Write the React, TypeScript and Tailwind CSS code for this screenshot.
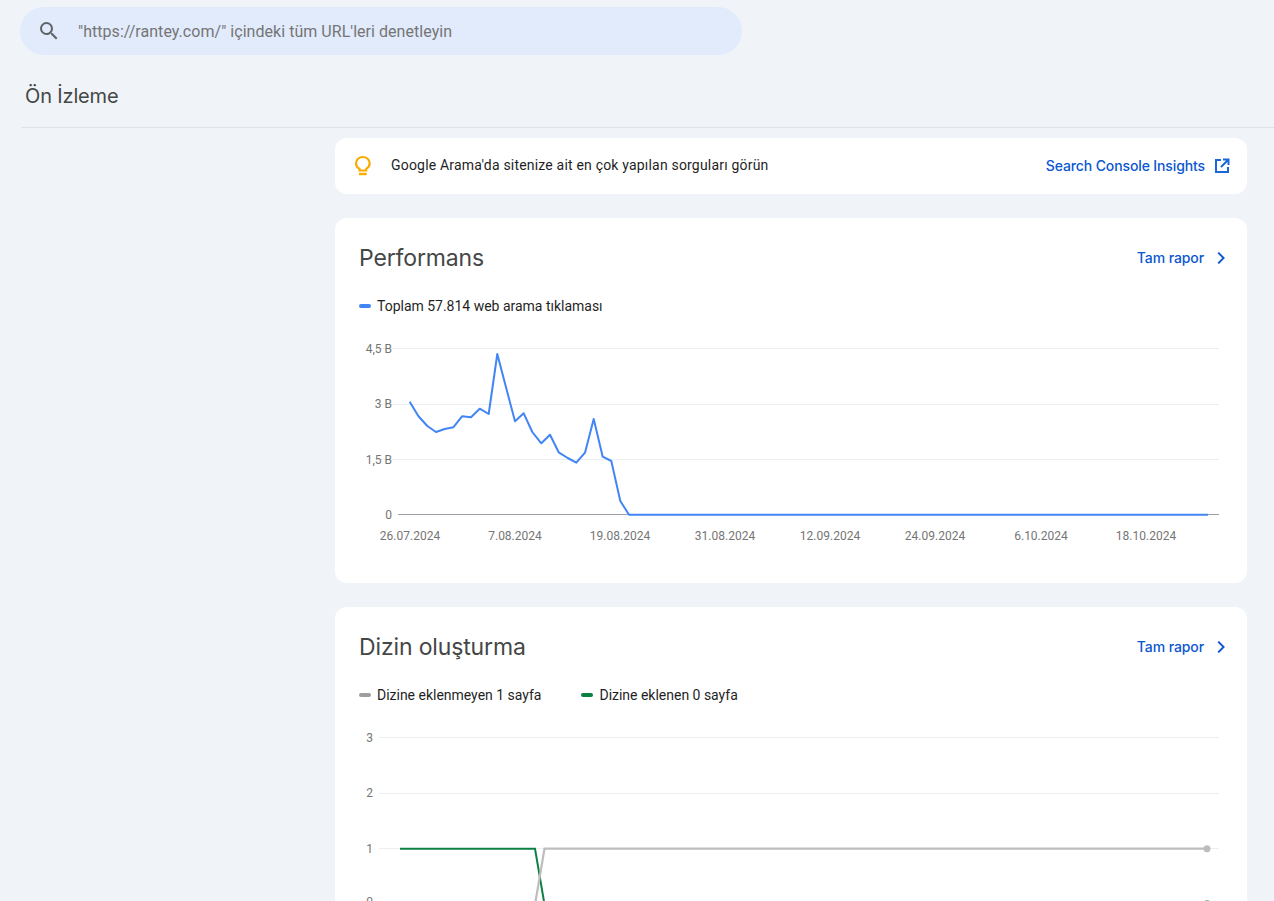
import React from "react";

const roboto = { fontFamily: "Roboto, sans-serif" };

const blue: [number, number][] = [[224,215],[250,258],[277,288],[303,306],[329,297],[355,292],[381,259],[408,262],[434,236],[461,252],[487,72],[513,172],[540,274],[566,250],[592,306],[619,340],[645,314],[671,367],[698,384],[724,398],[750,368],[776,267],[803,380],[829,393],[856,513],[882,554]];
const bluePts = blue.map(([x, y]) => `${(x / 3).toFixed(1)},${(y / 3).toFixed(1)}`).join(" ") + " 873,184.7";

const dates: [string, number][] = [["26.07.2024",75],["7.08.2024",180],["19.08.2024",285],["31.08.2024",390],["12.09.2024",495],["24.09.2024",600],["6.10.2024",706],["18.10.2024",811]];

function FullReport() {
  return (
    <a className="flex items-center">
      <span className="pb-[2px] font-['Inter',sans-serif] text-[14px] font-medium tracking-[-0.1px] text-[#0b57d0]">Tam rapor</span>
      <svg className="ml-[11px] mr-[-4px]" width="12" height="12" viewBox="0 0 12 12" fill="none">
        <path d="M3.2 .6 8.6 6l-5.4 5.4" stroke="#0b57d0" strokeWidth="1.9" />
      </svg>
    </a>
  );
}

function Legend({ color, label }: { color: string; label: string }) {
  return (
    <div className="flex items-center gap-[6px]">
      <span className="h-[4px] w-[12px] rounded-full" style={{ backgroundColor: color }} />
      <span className="text-[14px] leading-[20px] tracking-[-0.01px] text-[#1f1f1f]" style={roboto}>{label}</span>
    </div>
  );
}

function CardHeader({ title }: { title: string }) {
  return (
    <div className="flex h-[32px] items-center justify-between">
      <h2 className="font-['Inter',sans-serif] text-[23px] font-normal leading-[32px] tracking-[-0.14px] text-[#444746]">{title}</h2>
      <FullReport />
    </div>
  );
}

export default function App() {
  return (
    <div className="h-[901px] w-[1274px] overflow-hidden bg-[#f0f4f9]" style={roboto}>
      <div className="px-[20px] pt-[7px]">
        <div className="flex h-[48px] w-[722px] items-center rounded-full bg-[#e1ebfc] pl-[17px]">
          <svg width="24" height="24" viewBox="0 0 24 24" fill="#5f6368">
            <path d="M15.5 14h-.79l-.28-.27A6.471 6.471 0 0 0 16 9.5 6.5 6.5 0 1 0 9.5 16c1.61 0 3.09-.59 4.23-1.57l.27.28v.79l5 4.99L20.49 19l-4.99-5zm-6 0C7.01 14 5 11.99 5 9.5S7.01 5 9.5 5 14 7.01 14 9.5 11.99 14 9.5 14z" />
          </svg>
          <span className="ml-[17px] pt-[2px] text-[16px] tracking-[0.04px] text-[#757575]">"https://rantey.com/" içindeki tüm URL'leri denetleyin</span>
        </div>
      </div>

      <div className="ml-[21px] mt-[17px] flex h-[56px] items-start border-b border-[#dfe3e6] pl-[4px]">
        <h1 className="font-['Inter',sans-serif] text-[20px] font-normal leading-[48px] tracking-[-0.15px] text-[#444746]">Ön İzleme</h1>
      </div>

      <main className="ml-[335px] mt-[10px] flex w-[912px] flex-col gap-[24px]">
        <section className="flex h-[56px] items-center justify-between rounded-[12px] bg-white pl-[18px] pr-[17px]">
          <div className="flex items-center">
            <svg width="20" height="24" viewBox="0 0 20 24" fill="none">
              <path d="M6.5 16.5v-1.6C4.4 13.7 3 11.6 3 9.3 3 5.6 6.1 3 9.8 3s6.9 2.6 6.9 6.3c0 2.3-1.4 4.4-3.5 5.6v1.6H6.5z" stroke="#f9ab00" strokeWidth="2.2" />
              <path d="M6 20h7.7" stroke="#f9ab00" strokeWidth="2.4" />
            </svg>
            <span className="ml-[18px] pb-[2px] text-[14px] leading-[20px] tracking-[0.19px] text-[#1f1f1f]">Google Arama'da sitenize ait en çok yapılan sorguları görün</span>
          </div>
          <a className="flex items-center">
            <span className="pb-[2px] font-['Inter',sans-serif] text-[14px] font-medium tracking-[-0.12px] text-[#0b57d0]">Search Console Insights</span>
            <svg className="ml-[9px]" width="16" height="16" viewBox="0 0 16 16" fill="none">
              <path d="M7 2H2v12h12V9" stroke="#1a67d8" strokeWidth="2" />
              <path d="M9 1.5h5.5V7M14 2 7 9" stroke="#1a67d8" strokeWidth="2" />
            </svg>
          </a>
        </section>

        <section className="h-[365px] rounded-[12px] bg-white">
          <div className="px-[24px] pt-[24px]">
            <CardHeader title="Performans" />
            <div className="mt-[22px] flex">
              <Legend color="#4285f4" label="Toplam 57.814 web arama tıklaması" />
            </div>
          </div>
          <svg className="mt-[14px] block" width="912" height="220" viewBox="0 0 912 220" fontFamily="Roboto, sans-serif" fontSize="12" fill="#757575">
            {[18.5, 74.5, 129.5].map((y) => <line key={y} x1="45" x2="884" y1={y} y2={y} stroke="#eceff1" />)}
            <line x1="63" x2="884" y1="184.5" y2="184.5" stroke="#9aa0a6" />
            {([["4,5 B",22.5],["3 B",78],["1,5 B",133.5],["0",189]] as [string, number][]).map(([t, y]) => (
              <text key={t} x="57" y={y} textAnchor="end">{t}</text>
            ))}
            {dates.map(([t, x]) => <text key={t} x={x} y="210" textAnchor="middle">{t}</text>)}
            <polyline points={bluePts} fill="none" stroke="#4285f4" strokeWidth="2" strokeLinejoin="round" />
          </svg>
        </section>

        <section className="h-[365px] rounded-[12px] bg-white">
          <div className="px-[24px] pt-[24px]">
            <CardHeader title="Dizin oluşturma" />
            <div className="mt-[22px] flex gap-[40px]">
              <Legend color="#9e9e9e" label="Dizine eklenmeyen 1 sayfa" />
              <Legend color="#0b8043" label="Dizine eklenen 0 sayfa" />
            </div>
          </div>
          <svg className="mt-[14px] block" width="912" height="200" viewBox="0 0 912 200" fontFamily="Roboto, sans-serif" fontSize="12" fill="#757575">
            {[18.5, 74.5, 129.5].map((y) => <line key={y} x1="44" x2="884" y1={y} y2={y} stroke="#eceff1" />)}
            {([["3",23],["2",78],["1",134],["0",187]] as [string, number][]).map(([t, y]) => (
              <text key={t} x="38" y={y} textAnchor="end">{t}</text>
            ))}
            <polyline points="65,129.7 200,129.7 209.5,185.5" fill="none" stroke="#0b8043" strokeWidth="2" />
            <polyline points="200,185.5 209.5,129.7 872,129.7" fill="none" stroke="#bdbdbd" strokeWidth="2.2" />
            <circle cx="872" cy="129.7" r="3.5" fill="#bdbdbd" />
            <circle cx="872" cy="184.5" r="3.5" fill="#0b8043" opacity="0.5" />
          </svg>
        </section>
      </main>
    </div>
  );
}
